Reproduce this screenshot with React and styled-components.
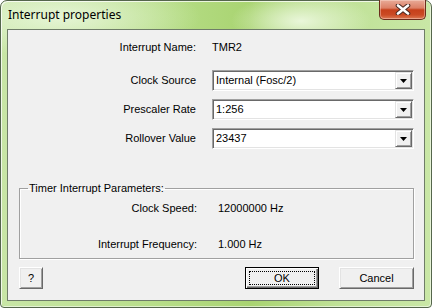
import React from 'react';
import styled, { createGlobalStyle } from 'styled-components';

const Global = createGlobalStyle`
  html, body { margin: 0; padding: 0; background: #ffffff; }
  body { width: 432px; height: 308px; overflow: hidden; }
  * { box-sizing: border-box; }
`;

const Window = styled.div`
  width: 432px;
  height: 308px;
  display: flex;
  flex-direction: column;
  border: 1px solid #55664c;
  border-radius: 7px 7px 4px 4px;
  padding: 0 6px 6px;
  background:
    radial-gradient(ellipse 70px 28px at 300px 20px, rgba(236, 248, 222, 0.95), rgba(236, 248, 222, 0)),
    radial-gradient(ellipse 140px 40px at 60px 16px, rgba(236, 248, 224, 0.85), rgba(236, 248, 224, 0)),
    linear-gradient(90deg, #c8e6a6 0%, #b8de8a 35%, #a9d471 58%, #bfe196 78%, #c9e7a6 100%);
  box-shadow: inset 1px 1px 0 rgba(255, 255, 255, 0.75), inset -1px -1px 0 rgba(255, 255, 255, 0.55);
  font-family: "Liberation Sans", Arial, sans-serif;
  font-size: 11px;
  color: #000;
`;

const TitleBar = styled.div`
  height: 28px;
  margin: 0 -6px;
  display: flex;
  align-items: flex-start;
  justify-content: space-between;
`;

const Title = styled.span`
  padding: 6px 0 0 7px;
  font-family: "Noto Sans", "Open Sans", sans-serif;
  font-size: 12px;
  line-height: 16px;
  color: #000;
`;

const CloseButton = styled.div`
  width: 47px;
  height: 20px;
  margin: -1px 5px 0 0;
  display: flex;
  align-items: center;
  justify-content: center;
  border: 1px solid #6a2c1c;
  border-top: none;
  border-radius: 0 0 5px 5px;
  background: linear-gradient(180deg, #e8ab98 0%, #dc8066 42%, #c6401b 52%, #cb4a24 78%, #dc7a55 100%);
  box-shadow: inset 0 0 0 1px rgba(255, 230, 220, 0.4);
`;

const ClientArea = styled.div`
  flex: 1;
  display: flex;
  flex-direction: column;
  background: #f0f0f0;
  border: 1px solid #6f7d68;
`;

const Form = styled.div`
  display: flex;
  flex-direction: column;
  padding: 7px 10px 0 11px;
`;

const FieldRow = styled.div`
  display: grid;
  grid-template-columns: 177px 202px;
  column-gap: 16px;
  height: 21px;
  align-items: center;
  margin-top: ${(p) => p.$gap || 0}px;
`;

const Label = styled.span`
  text-align: right;
  line-height: 13px;
`;

const Value = styled.span`
  line-height: 13px;
`;

const Combo = styled.div`
  height: 21px;
  display: flex;
  align-items: stretch;
  background: #fff;
  border-style: solid;
  border-width: 1px;
  border-color: #a0a0a0 #ffffff #ffffff #a0a0a0;
  box-shadow: inset 1px 1px 0 #696969, inset -1px -1px 0 #e3e3e3;
  padding: 1px;
`;

const ComboText = styled.span`
  flex: 1;
  padding-left: 2px;
  line-height: 17px;
  white-space: nowrap;
`;

const ComboArrow = styled.div`
  width: 17px;
  display: flex;
  align-items: center;
  justify-content: center;
  background: #f0f0f0;
  border-style: solid;
  border-width: 1px;
  border-color: #e3e3e3 #696969 #696969 #e3e3e3;
  box-shadow: inset 1px 1px 0 #ffffff, inset -1px -1px 0 #a0a0a0;
`;

const Group = styled.fieldset`
  margin: 33px 10px 0 11px;
  padding: 7px 0 7px 0;
  border: 1px solid #a0a0a0;
  box-shadow: 1px 1px 0 #ffffff, inset 1px 1px 0 #ffffff;
  min-width: 0;
`;

const Legend = styled.legend`
  margin-left: 8px;
  padding: 0 1px;
  line-height: 13px;
`;

const GroupGrid = styled.div`
  display: grid;
  grid-template-columns: 177px 1fr;
  column-gap: 21px;
  row-gap: 23px;
`;

const ButtonRow = styled.div`
  display: flex;
  align-items: center;
  margin: 8px 10px 0 11px;
`;

const Spacer = styled.div`
  flex: 1;
`;

const Button = styled.button`
  position: relative;
  width: ${(p) => p.$w}px;
  height: 22px;
  margin-left: ${(p) => p.$ml || 0}px;
  padding: 0;
  font-family: "Liberation Sans", Arial, sans-serif;
  font-size: 11px;
  color: #000;
  background: #f0f0f0;
  border-style: solid;
  border-width: 1px;
  border-color: ${(p) => (p.$default ? '#000 #000 #000 #000' : '#ffffff #696969 #696969 #ffffff')};
  box-shadow: ${(p) =>
    p.$default
      ? 'inset 1px 1px 0 #ffffff, inset -1px -1px 0 #696969, inset -2px -2px 0 #a0a0a0'
      : 'inset 1px 1px 0 #e3e3e3, inset -1px -1px 0 #a0a0a0'};
  &::after {
    content: '';
    display: ${(p) => (p.$default ? 'block' : 'none')};
    position: absolute;
    inset: 3px;
    border: 1px dotted #000;
  }
`;

const Arrow = () => (
  <svg width="7" height="4" viewBox="0 0 7 4">
    <path d="M0 0H7L3.5 4Z" fill="#000" />
  </svg>
);

const CloseGlyph = () => (
  <svg width="16" height="11" viewBox="0 0 16 11">
    <path d="M3 1.5L13 9.5M13 1.5L3 9.5" stroke="#4a2a22" strokeWidth="4.6" strokeLinecap="round" />
    <path d="M3 1.5L13 9.5M13 1.5L3 9.5" stroke="#ffffff" strokeWidth="2.6" strokeLinecap="round" />
  </svg>
);

const Select = ({ value }) => (
  <Combo>
    <ComboText>{value}</ComboText>
    <ComboArrow>
      <Arrow />
    </ComboArrow>
  </Combo>
);

export default function App() {
  return (
    <>
      <Global />
      <Window>
        <TitleBar>
          <Title>Interrupt properties</Title>
          <CloseButton>
            <CloseGlyph />
          </CloseButton>
        </TitleBar>
        <ClientArea>
          <Form>
            <FieldRow>
              <Label>Interrupt Name:</Label>
              <Value>TMR2</Value>
            </FieldRow>
            <FieldRow $gap={12}>
              <Label>Clock Source</Label>
              <Select value="Internal (Fosc/2)" />
            </FieldRow>
            <FieldRow $gap={8}>
              <Label>Prescaler Rate</Label>
              <Select value="1:256" />
            </FieldRow>
            <FieldRow $gap={8}>
              <Label>Rollover Value</Label>
              <Select value="23437" />
            </FieldRow>
          </Form>
          <Group>
            <Legend>Timer Interrupt Parameters:</Legend>
            <GroupGrid>
              <Label>Clock Speed:</Label>
              <Value>12000000 Hz</Value>
              <Label>Interrupt Frequency:</Label>
              <Value>1.000 Hz</Value>
            </GroupGrid>
          </Group>
          <ButtonRow>
            <Button $w={24}>?</Button>
            <Spacer />
            <Button $w={74} $default>OK</Button>
            <Button $w={75} $ml={20}>Cancel</Button>
          </ButtonRow>
        </ClientArea>
      </Window>
    </>
  );
}
